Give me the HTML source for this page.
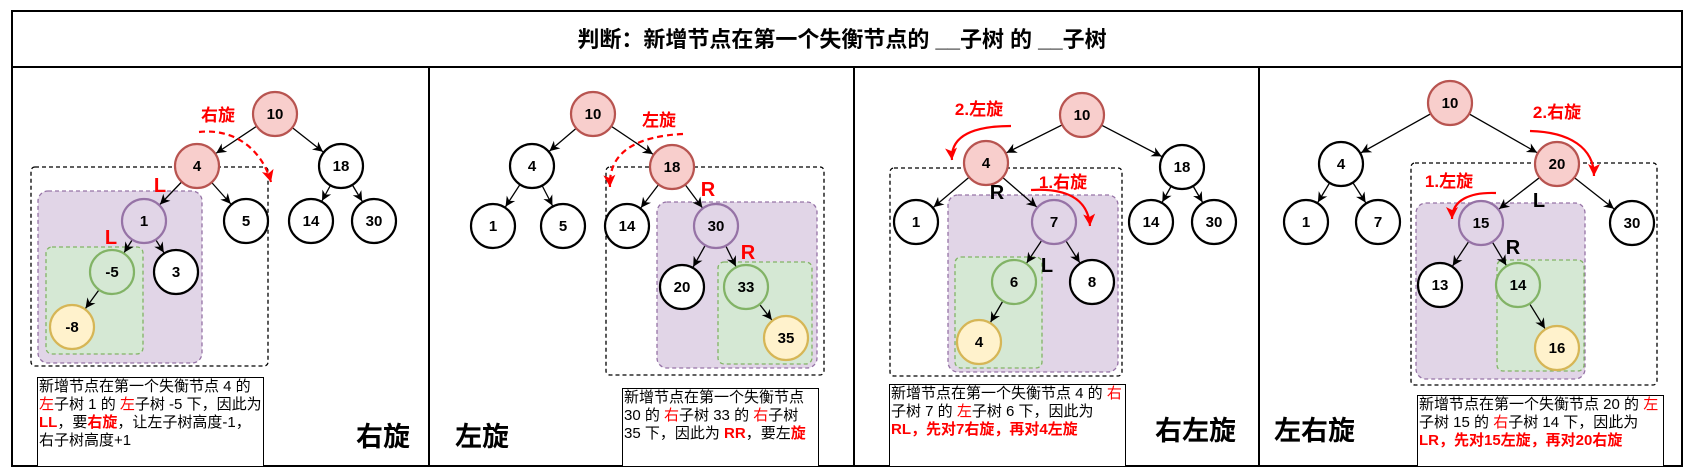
<!DOCTYPE html>
<html><head><meta charset="utf-8"><style>
body{margin:0;width:1691px;height:475px;background:#fff;position:relative;overflow:hidden;font-family:"Liberation Sans","Noto Sans CJK SC",sans-serif}
svg{position:absolute;left:0;top:0}
.tb{position:absolute;border:1px solid #000;background:#fff;font-size:15px;line-height:18px;color:#000;padding:0 1px;box-sizing:border-box;overflow:hidden;white-space:nowrap}
.r{color:#f00}
.rb{color:#f00;font-weight:bold}
.big{position:absolute;font-size:27px;font-weight:bold;color:#000;line-height:30px}
</style></head><body>
<svg width="1691" height="475" xmlns="http://www.w3.org/2000/svg" font-family="Liberation Sans, Noto Sans CJK SC, sans-serif">
<defs>
<marker id="a" markerUnits="userSpaceOnUse" markerWidth="1" markerHeight="1" refX="0" refY="0" orient="auto" overflow="visible">
<path d="M-23,0 L-33,-5 L-30,0 L-33,5 z" fill="#000"/></marker>
<marker id="ra" markerUnits="userSpaceOnUse" markerWidth="1" markerHeight="1" refX="0" refY="0" orient="auto" overflow="visible">
<path d="M0,0 L-12,-6 L-9,0 L-12,6 z" fill="#f00"/></marker>
</defs>
<rect x="12" y="11" width="1670" height="455" fill="none" stroke="#000" stroke-width="2"/>
<line x1="12" y1="67" x2="1682" y2="67" stroke="#000" stroke-width="2"/>
<line x1="429" y1="67" x2="429" y2="466" stroke="#000" stroke-width="2"/>
<line x1="854" y1="67" x2="854" y2="466" stroke="#000" stroke-width="2"/>
<line x1="1259" y1="67" x2="1259" y2="466" stroke="#000" stroke-width="2"/>
<text x="842" y="47" text-anchor="middle" font-size="22" font-weight="bold">判断：新增节点在第一个失衡节点的 __子树 的 __子树</text>

<g stroke-dasharray="4,3" stroke-width="1.3">
<rect x="31" y="167" width="237" height="199" rx="4" fill="none" stroke="#000"/>
<rect x="38" y="191" width="164" height="172" rx="10" fill="#e1d5e7" stroke="#9673a6"/>
<rect x="46" y="247" width="97" height="107" rx="6" fill="#d5e8d4" stroke="#82b366"/>
<rect x="606" y="167" width="218" height="208" rx="4" fill="none" stroke="#000"/>
<rect x="657" y="202" width="160" height="166" rx="10" fill="#e1d5e7" stroke="#9673a6"/>
<rect x="718" y="262" width="94" height="102" rx="6" fill="#d5e8d4" stroke="#82b366"/>
<rect x="890" y="168" width="232" height="208" rx="4" fill="none" stroke="#000"/>
<rect x="948" y="195" width="170" height="177" rx="10" fill="#e1d5e7" stroke="#9673a6"/>
<rect x="955" y="257" width="87" height="111" rx="6" fill="#d5e8d4" stroke="#82b366"/>
<rect x="1411" y="163" width="246" height="222" rx="4" fill="none" stroke="#000"/>
<rect x="1416" y="203" width="169" height="176" rx="10" fill="#e1d5e7" stroke="#9673a6"/>
<rect x="1497" y="260" width="87" height="111" rx="6" fill="#d5e8d4" stroke="#82b366"/>
</g>

<g stroke="#000" stroke-width="1.3" marker-end="url(#a)">
<line x1="275" y1="114" x2="197" y2="166"/><line x1="275" y1="114" x2="341" y2="166"/>
<line x1="197" y1="166" x2="144" y2="221"/><line x1="197" y1="166" x2="246" y2="221"/>
<line x1="341" y1="166" x2="311" y2="221"/><line x1="341" y1="166" x2="374" y2="221"/>
<line x1="144" y1="221" x2="112" y2="272"/><line x1="144" y1="221" x2="176" y2="272"/>
<line x1="112" y1="272" x2="72" y2="327"/>
<line x1="593" y1="114" x2="532" y2="166"/><line x1="593" y1="114" x2="672" y2="167"/>
<line x1="532" y1="166" x2="493" y2="226"/><line x1="532" y1="166" x2="563" y2="226"/>
<line x1="672" y1="167" x2="627" y2="226"/><line x1="672" y1="167" x2="716" y2="226"/>
<line x1="716" y1="226" x2="682" y2="287"/><line x1="716" y1="226" x2="746" y2="287"/>
<line x1="746" y1="287" x2="786" y2="338"/>
<line x1="1082" y1="115" x2="986" y2="163"/><line x1="1082" y1="115" x2="1182" y2="167"/>
<line x1="986" y1="163" x2="916" y2="222"/><line x1="986" y1="163" x2="1054" y2="222"/>
<line x1="1182" y1="167" x2="1151" y2="222"/><line x1="1182" y1="167" x2="1214" y2="222"/>
<line x1="1054" y1="222" x2="1014" y2="282"/><line x1="1054" y1="222" x2="1092" y2="282"/>
<line x1="1014" y1="282" x2="979" y2="342"/>
<line x1="1450" y1="103" x2="1341" y2="164"/><line x1="1450" y1="103" x2="1557" y2="164"/>
<line x1="1341" y1="164" x2="1306" y2="222"/><line x1="1341" y1="164" x2="1378" y2="222"/>
<line x1="1557" y1="164" x2="1481" y2="223"/><line x1="1557" y1="164" x2="1632" y2="223"/>
<line x1="1481" y1="223" x2="1440" y2="285"/><line x1="1481" y1="223" x2="1518" y2="285"/>
<line x1="1518" y1="285" x2="1557" y2="348"/>
</g>

<g stroke-width="2.2">
<g fill="#fff" stroke="#000">
<circle cx="341" cy="166" r="22"/><circle cx="246" cy="221" r="22"/><circle cx="311" cy="221" r="22"/><circle cx="374" cy="221" r="22"/><circle cx="176" cy="272" r="22"/>
<circle cx="532" cy="166" r="22"/><circle cx="493" cy="226" r="22"/><circle cx="563" cy="226" r="22"/><circle cx="627" cy="226" r="22"/><circle cx="682" cy="287" r="22"/>
<circle cx="1182" cy="167" r="22"/><circle cx="916" cy="222" r="22"/><circle cx="1151" cy="222" r="22"/><circle cx="1214" cy="222" r="22"/><circle cx="1092" cy="282" r="22"/>
<circle cx="1341" cy="164" r="22"/><circle cx="1306" cy="222" r="22"/><circle cx="1378" cy="222" r="22"/><circle cx="1632" cy="223" r="22"/><circle cx="1440" cy="285" r="22"/>
</g>
<g fill="#f8cecc" stroke="#b85450">
<circle cx="275" cy="114" r="22"/><circle cx="197" cy="166" r="22"/>
<circle cx="593" cy="114" r="22"/><circle cx="672" cy="167" r="22"/>
<circle cx="1082" cy="115" r="22"/><circle cx="986" cy="163" r="22"/>
<circle cx="1450" cy="103" r="22"/><circle cx="1557" cy="164" r="22"/>
</g>
<g fill="#e1d5e7" stroke="#9673a6">
<circle cx="144" cy="221" r="22"/><circle cx="716" cy="226" r="22"/><circle cx="1054" cy="222" r="22"/><circle cx="1481" cy="223" r="22"/>
</g>
<g fill="#d5e8d4" stroke="#82b366">
<circle cx="112" cy="272" r="22"/><circle cx="746" cy="287" r="22"/><circle cx="1014" cy="282" r="22"/><circle cx="1518" cy="285" r="22"/>
</g>
<g fill="#fff2cc" stroke="#d6b656">
<circle cx="72" cy="327" r="22"/><circle cx="786" cy="338" r="22"/><circle cx="979" cy="342" r="22"/><circle cx="1557" cy="348" r="22"/>
</g>
</g>

<g font-size="15" font-weight="bold" text-anchor="middle" fill="#000">
<text x="275" y="119">10</text><text x="197" y="171">4</text><text x="341" y="171">18</text><text x="144" y="226">1</text><text x="246" y="226">5</text><text x="311" y="226">14</text><text x="374" y="226">30</text><text x="112" y="277">-5</text><text x="176" y="277">3</text><text x="72" y="332">-8</text>
<text x="593" y="119">10</text><text x="532" y="171">4</text><text x="672" y="172">18</text><text x="493" y="231">1</text><text x="563" y="231">5</text><text x="627" y="231">14</text><text x="716" y="231">30</text><text x="682" y="292">20</text><text x="746" y="292">33</text><text x="786" y="343">35</text>
<text x="1082" y="120">10</text><text x="986" y="168">4</text><text x="1182" y="172">18</text><text x="916" y="227">1</text><text x="1054" y="227">7</text><text x="1151" y="227">14</text><text x="1214" y="227">30</text><text x="1014" y="287">6</text><text x="1092" y="287">8</text><text x="979" y="347">4</text>
<text x="1450" y="108">10</text><text x="1341" y="169">4</text><text x="1557" y="169">20</text><text x="1306" y="227">1</text><text x="1378" y="227">7</text><text x="1481" y="228">15</text><text x="1632" y="228">30</text><text x="1440" y="290">13</text><text x="1518" y="290">14</text><text x="1557" y="353">16</text>
</g>

<g fill="#f00" font-weight="bold">
<text x="218" y="121" font-size="17" text-anchor="middle">右旋</text>
<text x="659" y="126" font-size="17" text-anchor="middle">左旋</text>
<text x="979" y="115" font-size="17" text-anchor="middle">2.左旋</text>
<text x="1063" y="188" font-size="17" text-anchor="middle">1.右旋</text>
<text x="1557" y="118" font-size="17" text-anchor="middle">2.右旋</text>
<text x="1449" y="187" font-size="17" text-anchor="middle">1.左旋</text>
<text x="160" y="192" font-size="20" text-anchor="middle">L</text>
<text x="111" y="244" font-size="20" text-anchor="middle">L</text>
<text x="708" y="196" font-size="20" text-anchor="middle">R</text>
<text x="748" y="259" font-size="20" text-anchor="middle">R</text>
</g>
<g fill="#000" font-weight="bold" font-size="20" text-anchor="middle">
<text x="997" y="199">R</text><text x="1047" y="272">L</text>
<text x="1539" y="207">L</text><text x="1513" y="254">R</text>
</g>

<g fill="none" stroke="#f00" stroke-width="2.2">
<path d="M199,132 C235,128 262,150 271,182" stroke-dasharray="6,4" marker-end="url(#ra)"/>
<path d="M683,134 C640,136 608,150 610,187" stroke-dasharray="6,4" marker-end="url(#ra)"/>
<path d="M1011,126 C975,126 950,135 952,160" marker-end="url(#ra)"/>
<path d="M1031,190 C1065,188 1088,198 1090,226" marker-end="url(#ra)"/>
<path d="M1530,131 C1570,132 1594,148 1594,176" marker-end="url(#ra)"/>
<path d="M1496,193 C1470,192 1452,200 1452,219" marker-end="url(#ra)"/>
</g>
</svg>

<div class="tb" style="left:37px;top:377px;width:227px;height:90px">新增节点在第一个失衡节点 4 的<br><span class="r">左</span>子树 1 的 <span class="r">左</span>子树 -5 下，因此为<br><span class="rb">LL</span>，要<span class="rb">右旋</span>，让左子树高度-1，<br>右子树高度+1</div>
<div class="tb" style="left:622px;top:388px;width:197px;height:79px">新增节点在第一个失衡节点<br>30 的 <span class="r">右</span>子树 33 的 <span class="r">右</span>子树<br>35 下，因此为 <span class="rb">RR</span>，要左<span class="rb">旋</span></div>
<div class="tb" style="left:889px;top:384px;width:237px;height:83px">新增节点在第一个失衡节点 4 的 <span class="r">右</span><br>子树 7 的 <span class="r">左</span>子树 6 下，因此为<br><span class="rb">RL，先对7右旋，再对4左旋</span></div>
<div class="tb" style="left:1417px;top:395px;width:247px;height:72px">新增节点在第一个失衡节点 20 的 <span class="r">左</span><br>子树 15 的 <span class="r">右</span>子树 14 下，因此为<br><span class="rb">LR，先对15左旋，再对20右旋</span></div>

<div class="big" style="left:356px;top:422px">右旋</div>
<div class="big" style="left:455px;top:422px">左旋</div>
<div class="big" style="left:1155px;top:416px">右左旋</div>
<div class="big" style="left:1274px;top:416px">左右旋</div>
</body></html>
